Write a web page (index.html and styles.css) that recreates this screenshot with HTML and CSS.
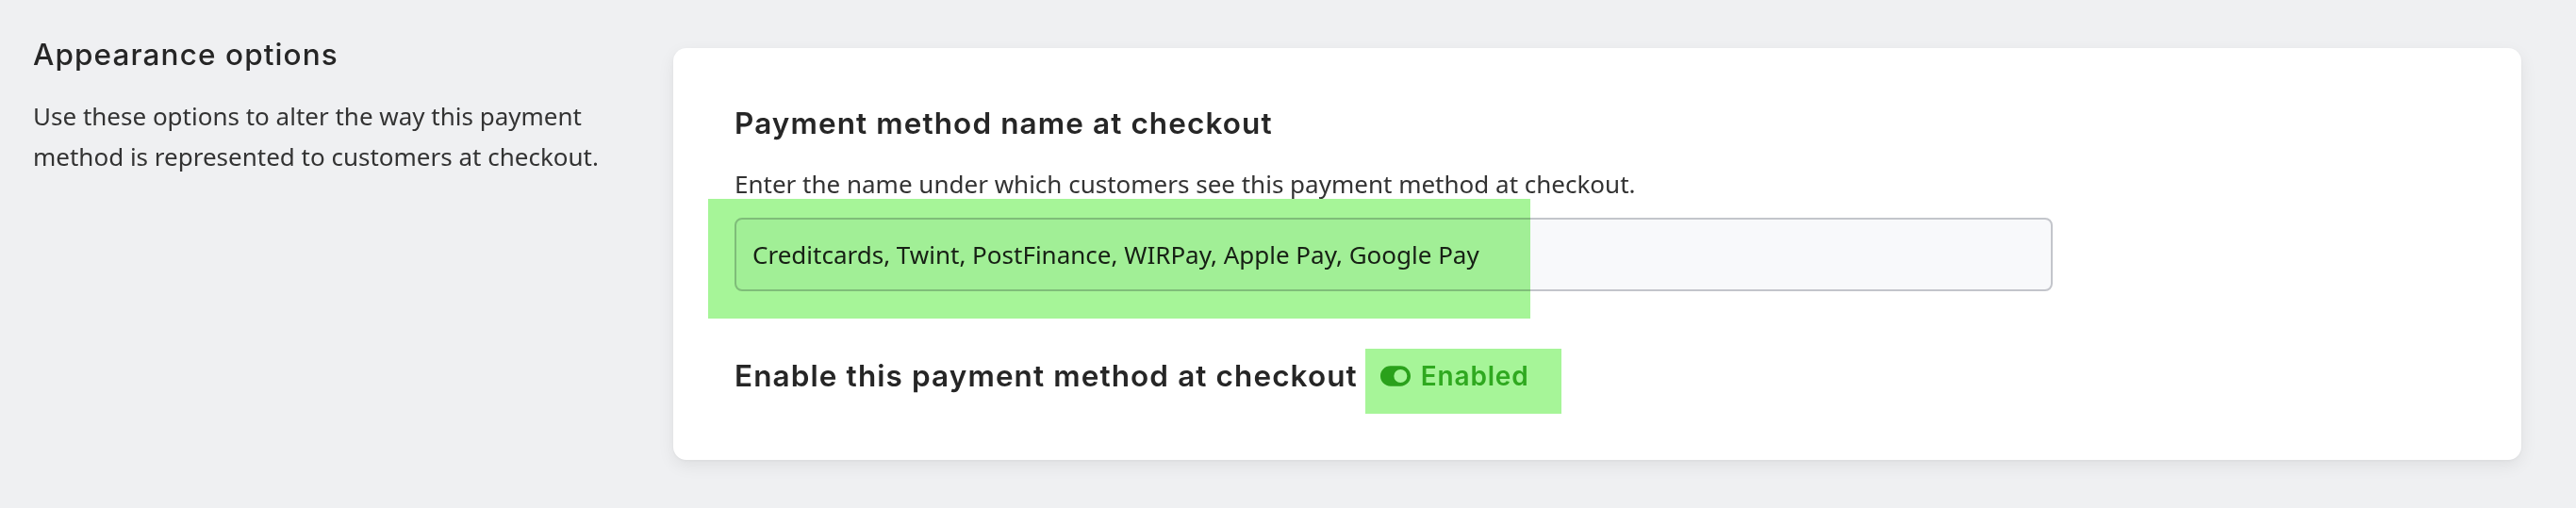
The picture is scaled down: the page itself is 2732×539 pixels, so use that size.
FILE: index.html
```html
<!DOCTYPE html>
<html lang="en">
<head>
<meta charset="utf-8">
<title>Appearance options</title>
<link rel="stylesheet" href="styles.css">
</head>
<body>
<div class="page">
  <section class="aside">
    <h2 class="aside-title">Appearance options</h2>
    <p class="aside-text">Use these options to alter the way this payment method is represented to customers at checkout.</p>
  </section>
  <section class="card">
    <h3 class="field-title">Payment method name at checkout</h3>
    <p class="field-help">Enter the name under which customers see this payment method at checkout.</p>
    <div class="input">Creditcards, Twint, PostFinance, WIRPay, Apple Pay, Google Pay</div>
    <div class="enable-row">
      <h3 class="field-title">Enable this payment method at checkout</h3>
      <span class="status">
        <svg class="toggle" viewBox="0 0 576 384" aria-hidden="true"><path fill="currentColor" fill-rule="evenodd" d="M192 0C86 0 0 86 0 192s86 192 192 192h192c106 0 192-86 192-192S490 0 384 0H192zm192 66a126 126 0 1 1 0 252a126 126 0 1 1 0-252z"/></svg>
        <span class="status-text">Enabled</span>
      </span>
    </div>
  </section>
  <div class="mark mark-input"></div>
  <div class="mark mark-status"></div>
</div>
</body>
</html>
```

FILE: styles.css
```css
html, body {
  margin: 0;
  padding: 0;
}
body {
  background: #eff0f2;
  color: #262626;
  height: 539px;
  overflow: hidden;
}
.page {
  position: relative;
  display: flex;
  align-items: flex-start;
  gap: 35px;
  padding: 51px 58px 0 35px;
}
.aside {
  flex: none;
  width: 644px;
}
.aside-title {
  margin: -12px 0 0;
  font-family: Inter, "Noto Sans", sans-serif;
  font-weight: 500;
  font-size: 31.5px;
  line-height: 38px;
  letter-spacing: 1.1px;
  color: #262626;
}
.aside-text {
  margin: 25px 0 0;
  font-family: "Noto Sans", "Open Sans", sans-serif;
  font-size: 26px;
  line-height: 43px;
  color: #333;
}
.card {
  flex: 1;
  box-sizing: border-box;
  height: 437px;
  background: #fff;
  border-radius: 14px;
  box-shadow: 0 6px 18px rgba(0, 0, 0, 0.07), 0 1px 3px rgba(0, 0, 0, 0.04);
  padding: 61px 65px 0;
}
.field-title {
  margin: 0;
  font-family: Inter, "Noto Sans", sans-serif;
  font-weight: 600;
  font-size: 31.5px;
  line-height: 38px;
  letter-spacing: 1.1px;
  color: #262626;
}
.field-help {
  margin: 24px 0 0;
  font-family: "Noto Sans", "Open Sans", sans-serif;
  font-size: 26px;
  line-height: 43px;
  color: #333;
}
.input {
  box-sizing: border-box;
  width: 1398px;
  height: 78px;
  margin-top: 14px;
  border: 2px solid #c3c5cb;
  border-radius: 8px;
  background: #f8f9fb;
  padding: 0 17px;
  display: flex;
  align-items: center;
  font-family: "Noto Sans", "Open Sans", sans-serif;
  font-size: 26px;
  color: #222;
}
.enable-row {
  display: flex;
  align-items: center;
  gap: 24px;
  margin-top: 71px;
}
.status {
  display: flex;
  align-items: center;
  gap: 11px;
  color: #47b034;
}
.status-text {
  font-family: Inter, "Noto Sans", sans-serif;
  font-weight: 600;
  font-size: 28px;
  line-height: 38px;
  letter-spacing: 0.8px;
}
.toggle {
  width: 32px;
  height: 22px;
  color: #40a82c;
}
.mark {
  position: absolute;
  background: #a6f598;
  mix-blend-mode: multiply;
  pointer-events: none;
}
.mark-input {
  left: 751px;
  top: 211px;
  width: 872px;
  height: 127px;
}
.mark-status {
  left: 1448px;
  top: 370px;
  width: 208px;
  height: 69px;
}
```
